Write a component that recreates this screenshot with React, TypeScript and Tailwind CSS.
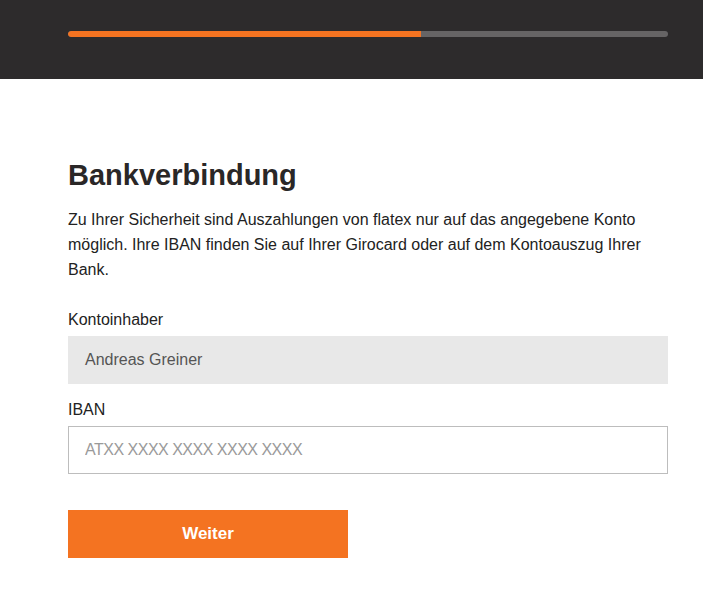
export default function App() {
  const progress = 353 / 600;
  return (
    <div className="min-h-[602px] bg-white" style={{ fontFamily: '"Liberation Sans", Arial, sans-serif' }}>
      <div className="h-[79px] bg-[#2d2b2c] px-[68px] pt-[31px]">
        <div className="h-[6px] w-[600px] rounded-full bg-[#666465] overflow-hidden">
          <div className="h-full bg-[#f47321] rounded-l-full" style={{ width: `${progress * 100}%` }} />
        </div>
      </div>
      <div className="w-[600px] ml-[68px] pt-[78px]">
        <h1 className="text-[29px] leading-[36px] font-bold text-[#2a2727]">Bankverbindung</h1>
        <p className="mt-[14px] text-[16px] leading-[25px] text-[#222]">
          Zu Ihrer Sicherheit sind Auszahlungen von flatex nur auf das angegebene Konto möglich. Ihre IBAN finden Sie auf Ihrer Girocard oder auf dem Kontoauszug Ihrer Bank.
        </p>
        <label className="block mt-[26px] text-[16px] leading-[24px] text-[#222]">Kontoinhaber</label>
        <div className="mt-[4px] h-[48px] bg-[#e8e8e8] flex items-center px-[17px] text-[16px] text-[#555]">Andreas Greiner</div>
        <label className="block mt-[14px] text-[16px] leading-[24px] text-[#222]">IBAN</label>
        <input
          className="mt-[4px] block w-full h-[48px] border border-[#bdbdbd] px-[16px] text-[16px] tracking-[-0.5px] text-[#222] placeholder:text-[#9a9a9a] outline-none"
          placeholder="ATXX XXXX XXXX XXXX XXXX"
        />
        <button className="mt-[36px] w-[280px] h-[48px] bg-[#f47321] text-white text-[17px] font-bold">Weiter</button>
      </div>
    </div>
  );
}
